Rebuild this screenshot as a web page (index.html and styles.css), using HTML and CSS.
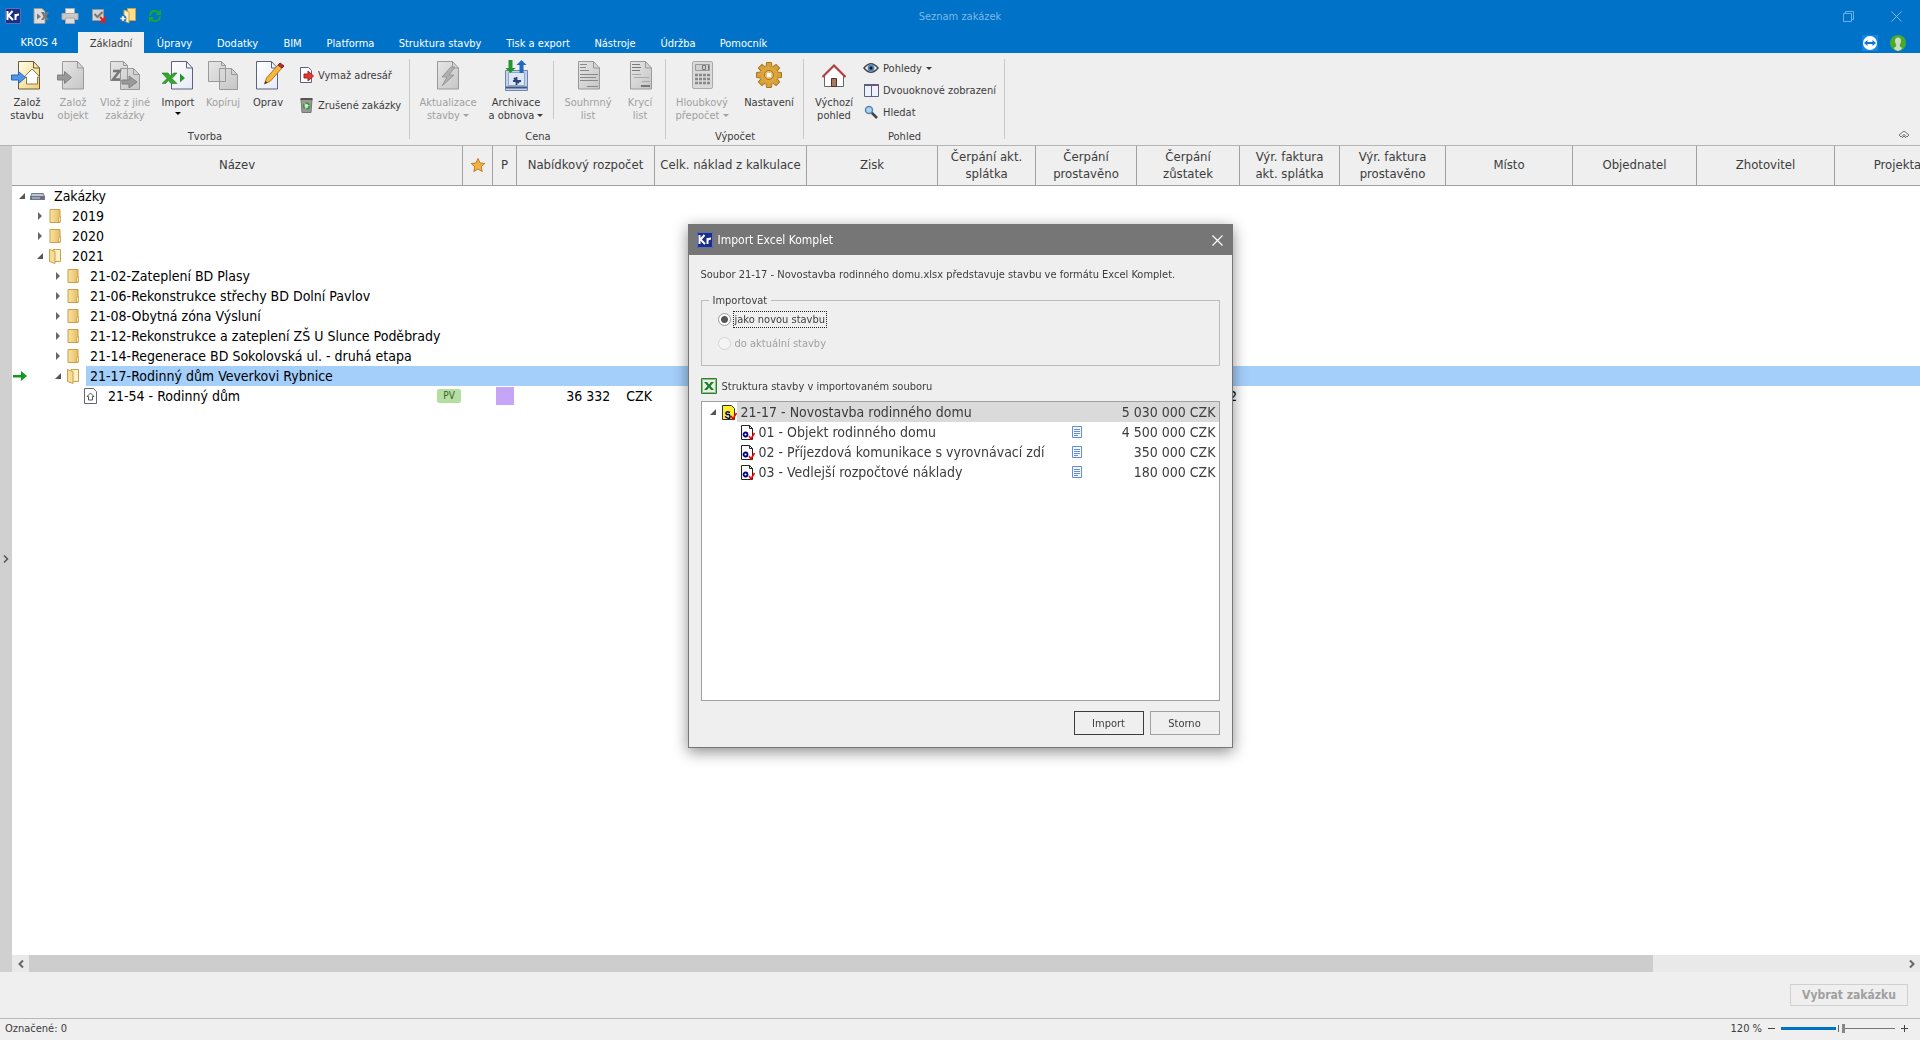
FILE: index.html
```html
<!DOCTYPE html>
<html lang="cs">
<head>
<meta charset="utf-8">
<title>Seznam zakázek</title>
<link rel="stylesheet" href="styles.css">
</head>
<body>
<svg class="defs" aria-hidden="true">
  <defs>
    <linearGradient id="gray" x1="0" y1="0" x2="1" y2="1"><stop offset="0" stop-color="#e6e6e6"/><stop offset="1" stop-color="#c6c6c6"/></linearGradient>
    <linearGradient id="white" x1="0" y1="0" x2="1" y2="1"><stop offset="0" stop-color="#fff"/><stop offset="1" stop-color="#e6e9f8"/></linearGradient>
    <linearGradient id="cream" x1="0" y1="0" x2="1" y2="1"><stop offset="0" stop-color="#fffdf0"/><stop offset="1" stop-color="#efd070"/></linearGradient>
    <linearGradient id="gold" x1="0" y1="0" x2="1" y2="0"><stop offset="0" stop-color="#fbe3a4"/><stop offset="1" stop-color="#e5bd62"/></linearGradient>
    <symbol id="page" viewBox="0 0 22 30"><path d="M.5 1.500h15l6 6.500v21H.5z"/><path d="M15.500 1.500v6.500h6" fill="none"/></symbol>
    <symbol id="kr" viewBox="0 0 16 16"><path d="M0 0h16v16H0z" fill="#1d2f83"/><path d="M2.500 3v9M7.500 3L3.500 7.500 8 12M10.500 6v6M10.500 9q0-2.500 3.500-2.500" fill="none" stroke="#fff" stroke-width="2"/><path d="M.5.5h15v15H.5z" fill="none" stroke="#5a70b8"/></symbol>
    <symbol id="folder" viewBox="0 0 16 16"><path d="M3 1.500h10v13H3z" fill="url(#gold)" stroke="#c99f48"/><path d="M11.500 14V9.500l2-1V14z" fill="#fbe9ba" stroke="#c99f48" stroke-width=".8"/></symbol>
    <symbol id="folder-open" viewBox="0 0 16 16"><path d="M6 1.500h7.500v12H6z" fill="#fdf0c2" stroke="#c9a14c"/><path d="M2.500 1.500L8 3.500v12l-5.500-2z" fill="#f8dc93" stroke="#c9a14c"/></symbol>
    <symbol id="obj" viewBox="0 0 16 16"><path d="M2.500 1.500h8l3 3v11h-11z" fill="#fff" stroke="#222"/><path d="M10.500 1.500v3h3" fill="none" stroke="#222"/><circle cx="6.500" cy="10.500" r="2" fill="none" stroke="#000080" stroke-width="1.800"/><path d="M10 12l2 3 3.500-6" fill="none" stroke="#f00" stroke-width="1.500"/></symbol>
    <symbol id="sheet" viewBox="0 0 12 12"><path d="M1.500.5h9v11h-9z" fill="#f3f8ff" stroke="#648fd0"/><path d="M3 3.500h6M3 5.500h6M3 7.500h6M3 9.500h4" stroke="#648fd0"/></symbol>
  </defs>
</svg>

<div class="app">
  <header class="titlebar">
    <div class="quick">
      <svg width="16" height="16"><use href="#kr"/></svg>
      <svg width="16" height="16" viewBox="0 0 16 16"><path d="M1 .5h8l3 3v12H1z" fill="#ddd" stroke="#999"/><path d="M4 5.500v6l4-3z" fill="#777"/><path d="M8 4h3l1.500 3 1-3H16l-2.500 4.500L16 12h-3l-1.300-2-1.200 2H8l2.500-3.500z" fill="#777"/></svg>
      <svg width="18" height="16" viewBox="0 0 18 16"><path d="M4.500.5h9v6h-9z" fill="#eee" stroke="#aaa"/><path d="M1 5.500h16v6H1z" fill="#c9c9c9" stroke="#aaa"/><path d="M4.500 10h9v5.500h-9z" fill="#ddd" stroke="#aaa"/></svg>
      <svg width="16" height="16" viewBox="0 0 16 16"><path d="M1.500 1.500h11v11h-11z" fill="#d4d4d4" stroke="#999"/><path d="M3.500 6l3 3 5-5" fill="none" stroke="#777" stroke-width="2"/><path d="M9 9l6 6M15 9l-6 6" stroke="#e02020" stroke-width="2"/></svg>
      <svg width="17" height="16" viewBox="0 0 17 16"><path d="M8.500.5h8v12h-8z" fill="#fbe08f" stroke="#caa24a"/><path d="M5 2l5 2v11l-5-2z" fill="#fff1bf" stroke="#caa24a"/><circle cx="4" cy="10.500" r="3.500" fill="#2c6ec4"/><path d="M4 8v5M1.500 10.500h5" stroke="#fff" stroke-width="1.500"/></svg>
      <svg width="14" height="16" viewBox="0 0 14 16"><path d="M2 7.500Q2.500 3 7 3q2.500 0 4 2M12 8.500Q11.500 13 7 13q-2.500 0-4-2" fill="none" stroke="#1aa82e" stroke-width="2"/><path d="M13 1.500V7H7.500zM1 14.500V9h5.500z" fill="#1aa82e"/></svg>
    </div>
    <h1 class="title">Seznam zakázek</h1>
    <div class="winbtns">
      <button type="button" aria-label="Obnovit"><svg width="11" height="11" viewBox="0 0 11 11"><path d="M.5 2.500h8v8h-8zM2.500 2.500v-2h8v8h-2" fill="none" stroke="#6fb1e4"/></svg></button>
      <button type="button" aria-label="Zavřít"><svg width="11" height="11" viewBox="0 0 11 11"><path d="M.5.5l10 10M10.500.5l-10 10" stroke="#7db9e7"/></svg></button>
    </div>
  </header>

  <nav class="tabs">
    <a class="tab tab-file" href="#">KROS 4</a>
    <a class="tab active" href="#">Základní</a>
    <a class="tab" href="#">Úpravy</a>
    <a class="tab" href="#">Dodatky</a>
    <a class="tab" href="#">BIM</a>
    <a class="tab" href="#">Platforma</a>
    <a class="tab" href="#">Struktura stavby</a>
    <a class="tab" href="#">Tisk a export</a>
    <a class="tab" href="#">Nástroje</a>
    <a class="tab" href="#">Údržba</a>
    <a class="tab" href="#">Pomocník</a>
    <div class="tab-tools">
      <svg width="16" height="16" viewBox="0 0 16 16"><path d="M0 0h16v16H0z" fill="#0e86e8"/><circle cx="8" cy="8" r="7" fill="#fff"/><path d="M2 8l3.500-3v2h5V5L14 8l-3.500 3V9h-5v2z" fill="#0e75cf"/></svg>
      <svg width="16" height="16" viewBox="0 0 16 16"><circle cx="8" cy="8" r="8" fill="#4aab2b"/><path d="M8 2.500q3 0 3 3.500 0 2-1.200 3.500v2l2.500 1.500Q10.500 16 8 16t-4.300-3l2.500-1.500v-2Q5 8 5 6q0-3.500 3-3.500z" fill="#cfdcc8"/></svg>
    </div>
  </nav>

  <section class="ribbon">
    <div class="group">
      <div class="tools tools-create">
        <button class="big" type="button"><svg width="32" height="32" viewBox="0 0 32 32"><use href="#page" x="7" width="22" height="30" fill="url(#cream)" stroke="#6a5c34"/><path d="M13 17l8-8 8 8h-2.500v7h-11v-7z" fill="#fff" stroke="#8a7a50"/><path d="M.5 15h7v-3.500l7 6-7 6V20h-7z" fill="#4d97ea" stroke="#2a65ae"/></svg><span>Založ<br>stavbu</span></button>
        <button class="big" type="button" disabled><svg width="32" height="32" viewBox="0 0 32 32"><use href="#page" x="5" width="22" height="30" fill="url(#gray)" stroke="#999"/><path d="M.5 15h7v-3.500l7 6-7 6V20h-7z" fill="#999" stroke="#808080"/></svg><span>Založ<br>objekt</span></button>
        <button class="big" type="button" disabled><svg width="32" height="32" viewBox="0 0 32 32"><path d="M1.500 1.500h13l4 4v15h-17zM11.500 8.500h13l6 6v15h-19z" fill="url(#gray)" stroke="#999"/><path d="M14.500 1.500v4h4M24.500 8.500v6h6" fill="none" stroke="#999"/><path d="M4 11h6.500L4 19.500h7" fill="none" stroke="#777" stroke-width="2.500"/><path d="M13 20h7v-4l8 6-8 6v-4h-7z" fill="#999" stroke="#808080"/></svg><span>Vlož z jiné<br>zakázky</span></button>
        <button class="big" type="button"><svg width="32" height="32" viewBox="0 0 32 32"><use href="#page" x="9" width="22" height="30" fill="url(#white)" stroke="#5d6080"/><path d="M0 13h6l2.500 3 3-3H15l-5 5.500 5 5H9l-2.500-3-3 3H0l5-5z" fill="#36a52e" stroke="#1b7a1b" stroke-width=".6"/><path d="M18 13.500v9l5-4.500z" fill="#28982b"/></svg><span>Import</span><i class="caret"></i></button>
        <button class="big" type="button" disabled><svg width="32" height="32" viewBox="0 0 32 32"><path d="M1.500 1.500h13l4 4v16h-17zM12.500 8.500h12l6 6v15h-18z" fill="url(#gray)" stroke="#999"/><path d="M14.500 1.500v4h4M24.500 8.500v6h6" fill="none" stroke="#999"/></svg><span>Kopíruj</span></button>
        <button class="big" type="button"><svg width="32" height="32" viewBox="0 0 32 32"><use href="#page" x="4" width="22" height="30" fill="url(#white)" stroke="#5d6080"/><path d="M12.500 24l2-6L26 5l4 3-11.500 13z" fill="#f6b83c" stroke="#b07420"/><path d="M26 5l2-2 4 3-2 2z" fill="#c03030" stroke="#8b1d1d"/><path d="M12.500 24l1-3 2 1.500z" fill="#333"/></svg><span>Oprav</span></button>
        <div class="list list-two">
          <button class="small" type="button"><svg width="16" height="16" viewBox="0 0 16 16"><path d="M2.500.5h8l3 3v12h-11z" fill="#fff" stroke="#5d6080"/><path d="M6 7h4V4l5.500 5-5.500 5v-3H6z" fill="#e03a2e" stroke="#a52020"/></svg>Vymaž adresář</button>
          <button class="small" type="button"><svg width="16" height="16" viewBox="0 0 16 16"><path d="M3 2h11l-1 13.500H4z" fill="#999" stroke="#777"/><path d="M2.500 1h12v2h-12z" fill="#555"/><circle cx="8.500" cy="9" r="2.800" fill="#ddd" stroke="#2c9b2c" stroke-width="1.800" stroke-dasharray="4.500 1.400"/></svg>Zrušené zakázky</button>
        </div>
      </div>
      <div class="caption">Tvorba</div>
    </div>
    <div class="group">
      <div class="tools tools-price">
        <button class="big" type="button" disabled><svg width="32" height="32" viewBox="0 0 32 32"><use href="#page" x="5" width="22" height="30" fill="url(#gray)" stroke="#999"/><path d="M19 7l-9 10h5l-5 9 12-11h-5l6-8z" fill="#b0b0b0" stroke="#999"/></svg><span>Aktualizace<br>stavby <i class="caret"></i></span></button>
        <button class="big" type="button"><svg width="32" height="32" viewBox="0 0 32 32"><path d="M5.500 10.500h22v20h-22z" fill="#c3d2e8" stroke="#6f86ac"/><path d="M8.500 12.500h16v13h-16z" fill="#dce6f4" stroke="#92a6c8"/><path d="M6 27.500h21" stroke="#3f5684" stroke-width="2"/><path d="M16.500 17v8M13 21h8M14 18l5 5" stroke="#2b4378" stroke-width="1.800"/><path d="M8.500 0h4v8h3l-5 5-5-5h3z" fill="#22962e"/><path d="M19.500 13V5h-3l5-5 5 5h-3v8z" fill="#1f6bbf"/></svg><span>Archivace<br>a obnova <i class="caret"></i></span></button>
        <div class="inner-sep"></div>
        <button class="big" type="button" disabled><svg width="32" height="32" viewBox="0 0 32 32"><use href="#page" x="6" width="22" height="30" fill="url(#gray)" stroke="#999"/><path d="M8 4.500h7M8 7.500h6M8 10.500h9M8 14.500h18M8 17.500h16M8 20.500h18M15 26.500h11" stroke="#888"/></svg><span>Souhrnný<br>list</span></button>
        <button class="big" type="button" disabled><svg width="32" height="32" viewBox="0 0 32 32"><use href="#page" x="6" width="22" height="30" fill="url(#gray)" stroke="#999"/><path d="M8 4.500h8M8 7.500h9M8 10.500h8" stroke="#777"/><path d="M8 14.500h9M10 17.500h15M18 21.500h8" stroke="#aaa"/><path d="M17 26h9" stroke="#777" stroke-width="2"/></svg><span>Krycí<br>list</span></button>
      </div>
      <div class="caption">Cena</div>
    </div>
    <div class="group">
      <div class="tools tools-calc">
        <button class="big" type="button" disabled><svg width="32" height="32" viewBox="0 0 32 32"><rect x="6.500" y="1.500" width="20" height="27" rx="1.500" fill="#dadada" stroke="#aaa"/><path d="M9.500 4.500h14v6h-14z" fill="#d0d0d0" stroke="#999"/><path d="M16.500 5.500h3v4h-3zM22.500 5v5" fill="none" stroke="#777"/><path d="M9 15h15M9 19h15M9 23h15" stroke="#888" stroke-width="2.500" stroke-dasharray="3 1"/></svg><span>Hloubkový<br>přepočet <i class="caret"></i></span></button>
        <button class="big" type="button"><svg width="32" height="32" viewBox="0 0 32 32"><g transform="translate(16 15)"><g fill="#d9a136" stroke="#a8741d"><path id="tooth" d="M-3-8l.5-4.500h5L3-8z"/><use href="#tooth" transform="rotate(45)"/><use href="#tooth" transform="rotate(90)"/><use href="#tooth" transform="rotate(135)"/><use href="#tooth" transform="rotate(180)"/><use href="#tooth" transform="rotate(225)"/><use href="#tooth" transform="rotate(270)"/><use href="#tooth" transform="rotate(315)"/></g><circle r="9" fill="#dba63e"/><circle r="4.500" fill="#e8c170" stroke="#a8741d"/><path d="M-2-2h4v4h-4z" fill="#fff"/></g></svg><span>Nastavení</span></button>
      </div>
      <div class="caption">Výpočet</div>
    </div>
    <div class="group">
      <div class="tools tools-view">
        <button class="big" type="button"><svg width="32" height="32" viewBox="0 0 32 32"><path d="M6.500 15L16 6l9.500 9v11.500h-19z" fill="#fff" stroke="#666"/><path d="M4.500 17L16 5.500 27.500 17" fill="none" stroke="#b53e42" stroke-width="2.200"/><path d="M13.500 18.500h5v8h-5z" fill="#a77b62" stroke="#4c3526"/></svg><span>Výchozí<br>pohled</span></button>
        <div class="list list-three">
          <button class="small" type="button"><svg width="16" height="16" viewBox="0 0 16 16"><path d="M1 8q7-8.500 14 0-7 8.500-14 0z" fill="#fff" stroke="#444" stroke-width="1.500"/><circle cx="8" cy="8" r="3.500" fill="#4a86bd"/><circle cx="8" cy="8" r="1.500" fill="#111"/></svg>Pohledy <i class="caret"></i></button>
          <button class="small" type="button"><svg width="16" height="16" viewBox="0 0 16 16"><path d="M1.500 2.500h14v12h-14zM8.500 4v10" fill="#eef2fb" stroke="#5c5f80"/><path d="M1 3h15" stroke="#5c5f80" stroke-width="2"/><path d="M13 3h2" stroke="#e33"/></svg>Dvouoknové zobrazení</button>
          <button class="small" type="button"><svg width="16" height="16" viewBox="0 0 16 16"><path d="M8.500 8.500l5.500 5.500" stroke="#444" stroke-width="2.500"/><circle cx="6" cy="6" r="3.500" fill="#a9d5f5" stroke="#5a86ae" stroke-width="1.500"/></svg>Hledat</button>
        </div>
      </div>
      <div class="caption">Pohled</div>
    </div>
    <button class="collapse" type="button" aria-label="Sbalit pás karet"><svg width="12" height="9" viewBox="0 0 12 9"><path d="M1 5l5-4 5 4-2 2-3-2.500L3 7zM4 8l2-2 2 2" fill="none" stroke="#777"/></svg></button>
  </section>

  <main class="work">
    <button class="rail" type="button" aria-label="Zobrazit panel"><svg width="6" height="8" viewBox="0 0 6 8"><path d="M1 .5L4.500 4 1 7.500" fill="none" stroke="#555" stroke-width="1.500"/></svg></button>
    <div class="pane">
      <div class="grid-wrap">
        <table class="grid">
          <colgroup><col class="c-name"><col class="c-star"><col class="c-p"><col class="c-138"><col class="c-152"><col class="c-131"><col class="c-98"><col class="c-101"><col class="c-103"><col class="c-100"><col class="c-106"><col class="c-127"><col class="c-124"><col class="c-138"><col class="c-138"></colgroup>
          <thead>
            <tr><th>Název</th><th><svg class="star" width="16" height="16" viewBox="0 0 16 16"><path d="M8 1.500l2 4.500 4.800.5-3.600 3.200 1 4.800L8 12l-4.200 2.500 1-4.800L1.200 6.500 6 6z" fill="#f4b146" stroke="#c07c25"/></svg></th><th>P</th><th>Nabídkový rozpočet</th><th>Celk. náklad z kalkulace</th><th>Zisk</th><th>Čerpání akt. splátka</th><th>Čerpání prostavěno</th><th>Čerpání zůstatek</th><th>Výr. faktura akt. splátka</th><th>Výr. faktura prostavěno</th><th>Místo</th><th>Objednatel</th><th>Zhotovitel</th><th>Projektant</th></tr>
          </thead>
          <tbody>
            <tr><td colspan="15"><div class="node l0"><i class="exp open"></i><svg width="16" height="16" viewBox="0 0 16 16"><path d="M2.500 5.500h12l1 5H1.500z" fill="#b9c6d2" stroke="#6e7b88"/><path d="M1 8h15v4H1z" fill="#66788a"/><path d="M3 10h8" stroke="#c8d4de"/><path d="M12 10h2" stroke="#d33" stroke-width="1.500"/></svg><span class="label">Zakázky</span></div></td></tr>
            <tr><td colspan="15"><div class="node l1"><i class="exp"></i><svg width="16" height="16"><use href="#folder"/></svg><span class="label">2019</span></div></td></tr>
            <tr><td colspan="15"><div class="node l1"><i class="exp"></i><svg width="16" height="16"><use href="#folder"/></svg><span class="label">2020</span></div></td></tr>
            <tr><td colspan="15"><div class="node l1"><i class="exp open"></i><svg width="16" height="16"><use href="#folder-open"/></svg><span class="label">2021</span></div></td></tr>
            <tr><td colspan="15"><div class="node l2"><i class="exp"></i><svg width="16" height="16"><use href="#folder"/></svg><span class="label">21-02-Zateplení BD Plasy</span></div></td></tr>
            <tr><td colspan="15"><div class="node l2"><i class="exp"></i><svg width="16" height="16"><use href="#folder"/></svg><span class="label">21-06-Rekonstrukce střechy BD Dolní Pavlov</span></div></td></tr>
            <tr><td colspan="15"><div class="node l2"><i class="exp"></i><svg width="16" height="16"><use href="#folder"/></svg><span class="label">21-08-Obytná zóna Výsluní</span></div></td></tr>
            <tr><td colspan="15"><div class="node l2"><i class="exp"></i><svg width="16" height="16"><use href="#folder"/></svg><span class="label">21-12-Rekonstrukce a zateplení ZŠ U Slunce Poděbrady</span></div></td></tr>
            <tr><td colspan="15"><div class="node l2"><i class="exp"></i><svg width="16" height="16"><use href="#folder"/></svg><span class="label">21-14-Regenerace BD Sokolovská ul. - druhá etapa</span></div></td></tr>
            <tr class="selected"><td colspan="15"><div class="node l2"><svg class="marker" width="15" height="12" viewBox="0 0 15 12"><path d="M0 5h8V1l6 5-6 5V7.500H0z" fill="#0d9a1f"/></svg><i class="exp open"></i><svg width="16" height="16"><use href="#folder-open"/></svg><span class="label">21-17-Rodinný dům Veverkovi Rybnice</span></div></td></tr>
            <tr><td><div class="node l3"><svg width="16" height="16" viewBox="0 0 16 16"><path d="M1.500.5h9l3 3v12h-12z" fill="#fff" stroke="#667"/><path d="M4 8.500L7.500 5 11 8.500H9.500V12h-4V8.500z" fill="none" stroke="#555"/></svg><span class="label">21-54 - Rodinný dům</span><span class="badge">PV</span></div></td><td></td><td><span class="swatch"></span></td><td class="num"><span class="money"><span>36 332</span><span>CZK</span></span></td><td></td><td></td><td></td><td></td><td class="num">36 332</td><td></td><td></td><td></td><td></td><td></td><td></td></tr>
          </tbody>
        </table>
      </div>
      <div class="hscroll">
        <button type="button" aria-label="Posunout vlevo"><svg width="6" height="8" viewBox="0 0 6 8"><path d="M5 .5L1.500 4 5 7.500" fill="none" stroke="#666" stroke-width="2"/></svg></button>
        <div class="thumb"></div>
        <div class="track"></div>
        <button type="button" aria-label="Posunout vpravo"><svg width="6" height="8" viewBox="0 0 6 8"><path d="M1 .5L4.500 4 1 7.500" fill="none" stroke="#666" stroke-width="2"/></svg></button>
      </div>
    </div>
  </main>

  <div class="actions"><button type="button" disabled>Vybrat zakázku</button></div>
  <footer class="status">
    <span>Označené: 0</span>
    <div class="zoom">
      <label for="zoom">120 %</label>
      <button type="button" aria-label="Zmenšit"><svg width="9" height="9" viewBox="0 0 9 9"><path d="M1 4.500h7" stroke="#444"/></svg></button>
      <input id="zoom" type="range" min="0" max="220" value="120">
      <button type="button" aria-label="Zvětšit"><svg width="9" height="9" viewBox="0 0 9 9"><path d="M1 4.500h7M4.500 1v7" stroke="#444"/></svg></button>
    </div>
  </footer>
</div>

<div class="overlay">
  <form class="dialog" role="dialog" aria-labelledby="dlg-title">
    <header class="dlg-head">
      <svg width="16" height="16"><use href="#kr"/></svg>
      <h2 id="dlg-title">Import Excel Komplet</h2>
      <button type="button" aria-label="Zavřít"><svg width="11" height="11" viewBox="0 0 11 11"><path d="M.5.5l10 10M10.500.5l-10 10" stroke="#fff" stroke-width="1.200"/></svg></button>
    </header>
    <div class="dlg-body">
      <p>Soubor 21-17 - Novostavba rodinného domu.xlsx představuje stavbu ve formátu Excel Komplet.</p>
      <fieldset>
        <legend>Importovat</legend>
        <div class="opt"><input id="as-new" type="radio" name="mode" checked><label class="focus" for="as-new">jako novou stavbu</label></div>
        <div class="opt"><input id="as-current" type="radio" name="mode" disabled><label class="off" for="as-current">do aktuální stavby</label></div>
      </fieldset>
      <div class="struct-title">
        <svg width="16" height="16" viewBox="0 0 16 16"><path d="M.5.5h15v15H.5z" fill="#e7f1e2" stroke="#2e7d32"/><path d="M1.500 1.500h13v13h-13z" fill="none" stroke="#8fbf8a"/><path d="M3 4h3l2 2.500L10 4h3L9.500 8l3.500 4h-3L8 9.500 6 12H3l3.500-4z" fill="#1f7a2e"/></svg>
        Struktura stavby v importovaném souboru
      </div>
      <div class="struct">
        <table>
          <tr class="root"><td><div class="snode"><i class="exp open"></i><svg width="16" height="16" viewBox="0 0 16 16"><path d="M1.500 1.500h9l3 3v11h-12z" fill="#ffee30" stroke="#333"/><path d="M9 8.500Q5 7 5 9t2 1.500T9 13t-5-.5" fill="none" stroke="#000080" stroke-width="1.500"/><path d="M10 12l2 3 3.500-6" fill="none" stroke="#f00" stroke-width="1.500"/></svg><span class="slabel">21-17 - Novostavba rodinného domu</span></div></td><td class="mark"></td><td class="amount">5 030 000 CZK</td></tr>
          <tr><td><div class="snode child"><svg width="16" height="16"><use href="#obj"/></svg><span class="slabel">01 - Objekt rodinného domu</span></div></td><td class="mark"><svg width="12" height="12"><use href="#sheet"/></svg></td><td class="amount">4 500 000 CZK</td></tr>
          <tr><td><div class="snode child"><svg width="16" height="16"><use href="#obj"/></svg><span class="slabel">02 - Příjezdová komunikace s vyrovnávací zdí</span></div></td><td class="mark"><svg width="12" height="12"><use href="#sheet"/></svg></td><td class="amount">350 000 CZK</td></tr>
          <tr><td><div class="snode child"><svg width="16" height="16"><use href="#obj"/></svg><span class="slabel">03 - Vedlejší rozpočtové náklady</span></div></td><td class="mark"><svg width="12" height="12"><use href="#sheet"/></svg></td><td class="amount">180 000 CZK</td></tr>
        </table>
      </div>
      <div class="dlg-btns"><button class="primary" type="button">Import</button><button type="button">Storno</button></div>
    </div>
  </form>
</div>
</body>
</html>
```
FILE: styles.css
```css
* { box-sizing: border-box; }
body {
  margin: 0;
  overflow: hidden;
  font: 11px/13px "DejaVu Sans Condensed", "Noto Sans", sans-serif;
  color: #3c3c3c;
  background: #efefef;
}
h1, h2, p { margin: 0; font-size: inherit; font-weight: normal; }
svg { display: block; flex: none; }
button { font: inherit; color: inherit; border: 0; background: none; padding: 0; }
.defs { position: absolute; width: 0; height: 0; }
.app { display: flex; flex-direction: column; height: 100vh; }

.titlebar { flex: none; display: grid; grid-template-columns: 1fr auto 1fr; align-items: center; height: 32px; background: #0072c8; }
.quick { display: flex; gap: 12px; padding-left: 5px; }
.title { color: #7cb8e8; }
.winbtns { display: flex; justify-content: flex-end; gap: 37px; padding-right: 18px; }

.tabs { flex: none; display: grid; grid-template-columns: 78px 66px 61px 65px 45px 71px 108px 88px 66px 60px 71px 1fr; height: 21px; background: #0072c8; }
.tab { color: #fff; text-align: center; text-decoration: none; line-height: 24px; height: 21px; white-space: nowrap; }
.tab-file { line-height: 21px; }
.tab.active { background: #efefef; color: #3c3c3c; }
.tab-tools { display: flex; justify-content: flex-end; gap: 12px; padding: 3px 14px 0 0; }

.ribbon { flex: none; display: flex; height: 93px; border-bottom: 1px solid #b4b4b4; position: relative; }
.group { display: flex; flex-direction: column; justify-content: space-between; padding: 7px 0 2px; background: linear-gradient(#c8c8c8, #c8c8c8) right center / 1px 80px no-repeat; }
.tools { display: grid; }
.tools-create { grid-template-columns: 46px 46px 58px 48px 42px 48px 118px; padding: 0 0 0 4px; }
.tools-price { grid-template-columns: 66px 70px 7px 60px 44px; padding: 0 4px 0 5px; }
.tools-calc { grid-template-columns: 68px 66px; padding: 0 2px; }
.tools-view { grid-template-columns: 50px 145px; padding: 0 1px 0 5px; }
.big { display: flex; flex-direction: column; align-items: center; justify-self: stretch; white-space: nowrap; }
.big span { margin-top: 4px; }
.big:disabled { color: #a0a0a0; }
.caret { display: inline-block; border: 3px solid transparent; border-top-color: currentColor; border-bottom: 0; vertical-align: 2px; }
.big > .caret { margin: 3px 0 0; color: #000; }
.inner-sep { width: 1px; height: 58px; margin: 1px 0 0 2px; background: #c8c8c8; }
.list { display: flex; flex-direction: column; align-items: flex-start; }
.list-two { gap: 14px; padding: 7px 0 0 6px; }
.list-three { gap: 6px; padding-left: 4px; }
.small { display: flex; align-items: center; gap: 4px; height: 16px; white-space: nowrap; }
.caption { text-align: center; }
.collapse { position: absolute; right: 10px; bottom: 6px; }

.work { flex: 1; min-height: 0; display: flex; }
.rail { flex: none; width: 12px; display: grid; place-items: center; background: #d0d0d0; }
.pane { flex: 1; min-width: 0; display: flex; flex-direction: column; background: #fff; }
.grid-wrap { flex: 1; min-height: 0; overflow: hidden; font-size: 14px; line-height: 17px; }
.grid { width: 1961px; table-layout: fixed; border-collapse: separate; border-spacing: 0; color: #000; }
.c-name { width: 451px; } .c-star { width: 30px; } .c-p { width: 24px; }
.c-98 { width: 98px; } .c-100 { width: 100px; } .c-101 { width: 101px; } .c-103 { width: 103px; } .c-106 { width: 106px; }
.c-124 { width: 124px; } .c-127 { width: 127px; } .c-131 { width: 131px; } .c-138 { width: 138px; } .c-152 { width: 152px; }
.grid th { height: 40px; padding: 0 4px 2px; font-size: 13px; font-weight: normal; color: #3c3c3c; background: #efefef; border-right: 1px solid #a0a0a0; border-bottom: 1px solid #a0a0a0; }
.star { margin: 0 auto; }
.grid td { height: 20px; padding: 0; }
.node { position: relative; display: flex; align-items: center; height: 20px; }
.l0 { padding-left: 4px; } .l1 { padding-left: 22px; } .l2 { padding-left: 40px; } .l3 { padding-left: 70px; }
.node svg { margin: 0 1px; }
.node .marker { position: absolute; left: 0; }
.label { flex: 1; margin-left: 4px; padding-left: 4px; line-height: 20px; white-space: nowrap; }
.selected .label { background: #a4cffb; }
.exp { flex: none; width: 12px; display: grid; place-items: center; }
.exp::before { content: ""; border: 4px solid transparent; border-left-color: #666; border-right: 0; }
.exp.open::before { border: 0 solid transparent; border-left-width: 6px; border-bottom: 6px solid #555; }
.badge { margin-right: 2px; width: 24px; font-size: 10px; line-height: 14px; text-align: center; color: #44603a; background: #b5dfa0; border-radius: 2px; }
.swatch { display: block; width: 18px; height: 18px; margin: 0 auto; background: #c5a5f5; }
.grid .num { text-align: right; padding-right: 3px; }
.money { display: flex; justify-content: flex-end; gap: 16px; }

.hscroll { flex: none; display: flex; height: 17px; background: #e9e9e9; }
.hscroll button { width: 17px; display: grid; place-items: center; }
.thumb { flex: 13; background: #cdcdcd; }
.track { flex: 2; }

.actions { flex: none; display: flex; justify-content: flex-end; height: 46px; padding: 12px 12px 0 0; }
.actions button { width: 118px; height: 22px; border: 1px solid #d0d0d0; color: #a0a0a0; font-weight: bold; font-size: 12px; }
.status { flex: none; display: flex; justify-content: space-between; align-items: center; height: 22px; padding: 0 11px 2px 5px; border-top: 1px solid #b8b8b8; }
.zoom { display: flex; align-items: center; gap: 5px; }
.zoom input { appearance: none; width: 114px; height: 11px; margin: 0; background: linear-gradient(#0072c8, #0072c8) left center / 55px 3px no-repeat, linear-gradient(#666, #666) 57px center / 1px 7px no-repeat, linear-gradient(#777, #777) right center / 51px 1px no-repeat; }
.zoom input::-webkit-slider-thumb { appearance: none; width: 3px; height: 9px; background: #888; }

.overlay { position: fixed; inset: 0; display: grid; place-items: center; padding-bottom: 68px; }
.dialog { width: 545px; background: #efefef; border: 1px solid #767676; box-shadow: 0 4px 14px rgba(0, 0, 0, .45); }
.dlg-head { display: flex; align-items: center; gap: 5px; height: 30px; padding: 0 9px 0 8px; background: #767676; color: #fff; font-size: 12px; }
.dlg-head h2 { flex: 1; }
.dlg-body { padding: 13px 12px 12px; }
.dlg-body p { white-space: nowrap; }
fieldset { margin: 13px 0 0; padding: 4px 0 13px 16px; border: 1px solid #bcbcbc; }
legend { padding: 0 4px; margin-left: -9px; }
.opt { display: flex; align-items: center; gap: 4px; height: 17px; }
.opt + .opt { margin-top: 7px; }
.opt input { appearance: none; width: 13px; height: 13px; margin: 0; border: 1px solid #999; border-radius: 50%; background: #fff; }
.opt input:checked { background: radial-gradient(circle, #555 3px, #fff 4px); }
.opt input:disabled { border-color: #d4d4d4; background: #f4f4f4; }
.focus { outline: 1px dotted #222; outline-offset: 1px; }
.off { color: #a0a0a0; }
.struct-title { display: flex; align-items: center; gap: 5px; margin: 12px 0 7px; }
.struct { height: 300px; border: 1px solid #a0a0a0; background: #fff; font-size: 14px; line-height: 20px; }
.struct table { width: 100%; border-collapse: collapse; }
.struct td { padding: 0; height: 20px; white-space: nowrap; }
.struct .root .mark, .struct .root .amount, .struct .root .slabel { background: #dadada; }
.snode { display: flex; align-items: center; padding-left: 5px; }
.snode svg { margin-left: 2px; }
.snode.child { padding-left: 35px; }
.slabel { flex: 1; padding-left: 4px; }
.mark { width: 24px; }
.amount { width: 124px; text-align: right; }
.struct .amount { padding-right: 3px; }
.dlg-btns { display: flex; justify-content: flex-end; gap: 6px; margin-top: 10px; }
.dlg-btns button { width: 70px; height: 24px; border: 1px solid #a0a0a0; }
.dlg-btns .primary { border-color: #3c3c3c; }
```
